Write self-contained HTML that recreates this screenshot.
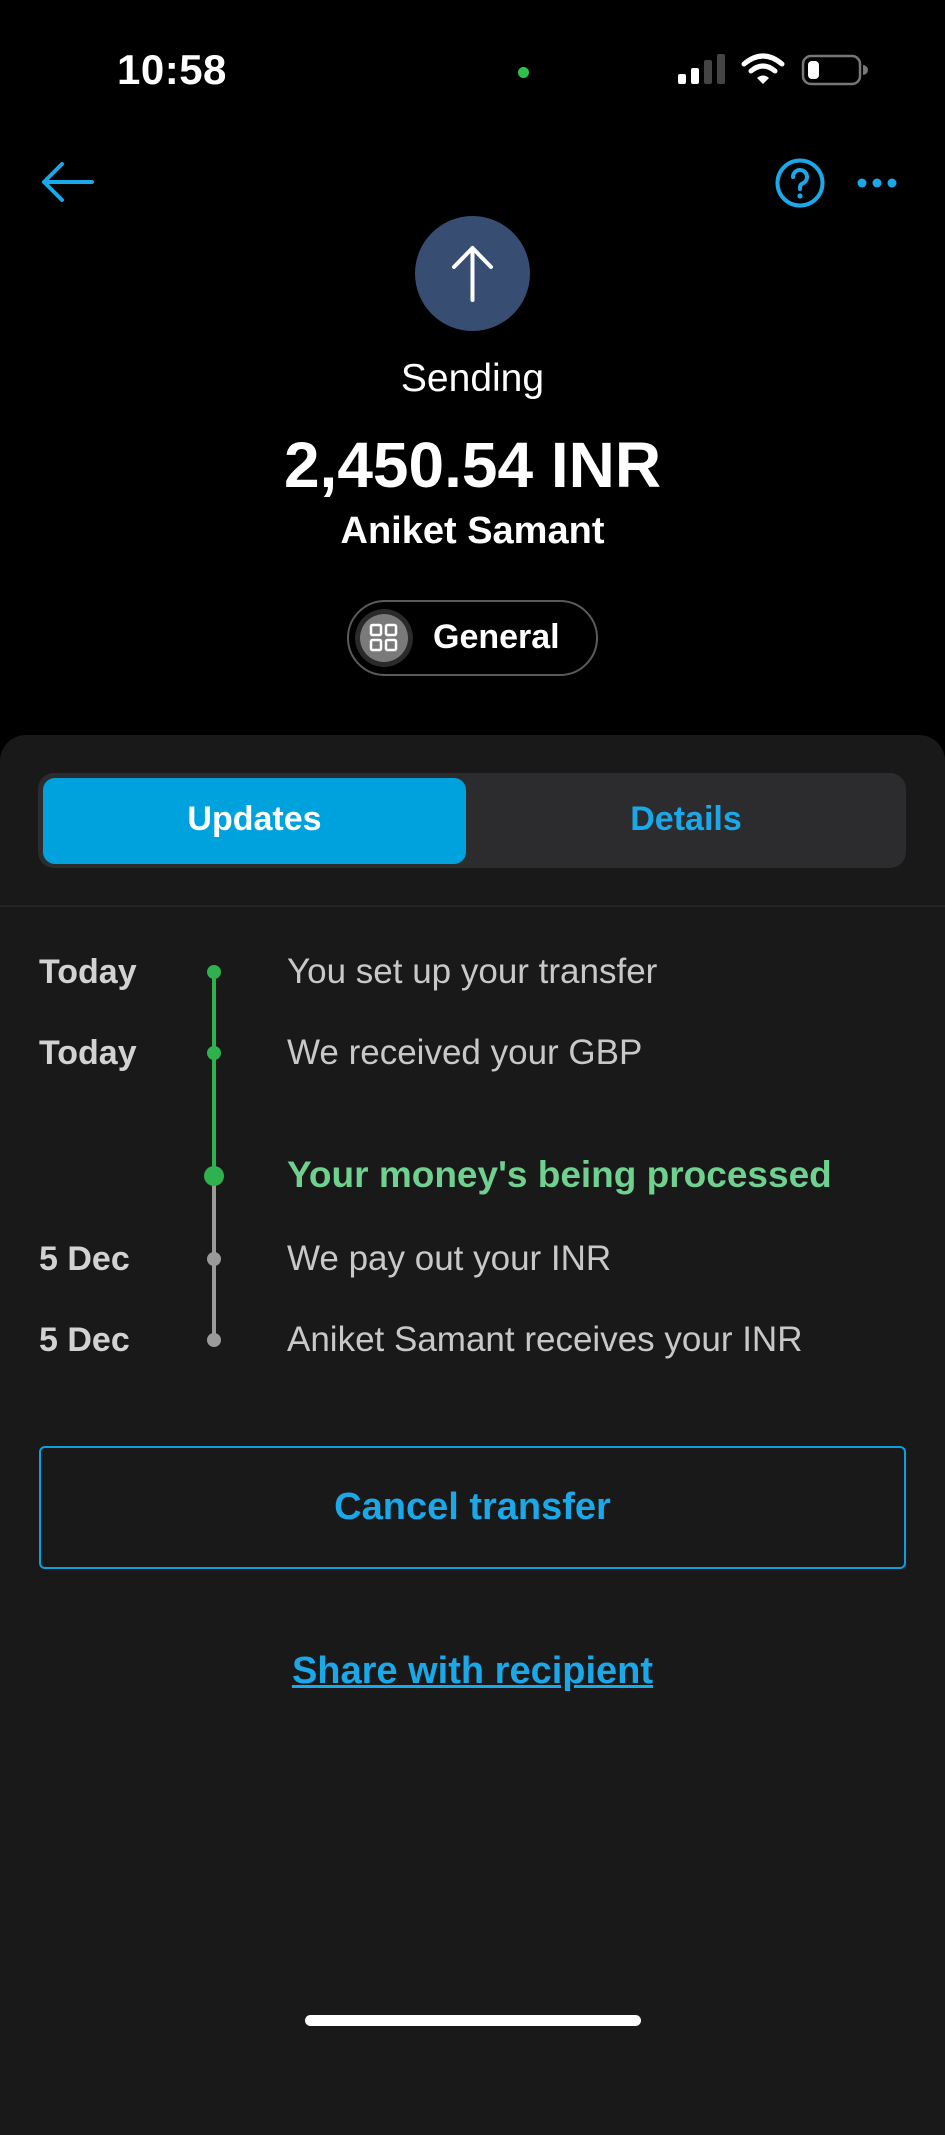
<!DOCTYPE html>
<html><head><meta charset="utf-8"><style>
*{margin:0;padding:0;box-sizing:border-box}
body{width:945px;height:2048px;background:#000;font-family:"Liberation Sans",sans-serif;position:relative;overflow:hidden;color:#fff}
.a{position:absolute}
.c{left:0;width:945px;text-align:center}
.t{white-space:nowrap}
</style></head><body>
<div class="a t" style="left:117px;top:46px;font-size:42px;font-weight:600;letter-spacing:0.5px">10:58</div>
<div class="a" style="left:518px;top:67px;width:11px;height:11px;border-radius:50%;background:#30c04f"></div>
<svg class="a" style="left:670px;top:50px" width="200" height="40">
<rect x="8" y="24" width="8" height="10" rx="2" fill="#fff"/>
<rect x="21" y="18" width="8" height="16" rx="2" fill="#fff"/>
<rect x="34" y="10" width="8" height="24" rx="2" fill="#444"/>
<rect x="47" y="4" width="8" height="30" rx="2" fill="#444"/>
<path d="M74 14 Q93 -2 112 14" stroke="#fff" stroke-width="5" fill="none" stroke-linecap="round"/>
<path d="M81 21 Q93 11 105 21" stroke="#fff" stroke-width="5" fill="none" stroke-linecap="round"/>
<path d="M87 28 L93 34 L99 28 Q93 23 87 28Z" fill="#fff"/>
<rect x="133" y="6" width="57" height="28" rx="8" fill="none" stroke="#777" stroke-width="2.5"/>
<rect x="138" y="11" width="11" height="18" rx="4" fill="#fff"/>
<path d="M193 15 v10 a4 4 0 0 0 0 -10z" fill="#777"/>
</svg>
<svg class="a" style="left:38px;top:160px" width="60" height="44"><path d="M54 22H6M24 4L6 22L24 40" stroke="#1aa8e8" stroke-width="4" fill="none" stroke-linecap="round" stroke-linejoin="round"/></svg>
<svg class="a" style="left:774px;top:157px" width="52" height="52"><circle cx="26" cy="26" r="22.5" stroke="#1aa8e8" stroke-width="4" fill="none"/><path d="M19 20a7 7 0 1 1 9.5 6.5c-1.8.8-2.5 2-2.5 4v1.5" stroke="#1aa8e8" stroke-width="4" fill="none" stroke-linecap="round"/><circle cx="26" cy="39" r="2.6" fill="#1aa8e8"/></svg>
<svg class="a" style="left:856px;top:174px" width="44" height="18"><circle cx="6" cy="9" r="4.5" fill="#1aa8e8"/><circle cx="21" cy="9" r="4.5" fill="#1aa8e8"/><circle cx="36" cy="9" r="4.5" fill="#1aa8e8"/></svg>
<div class="a" style="left:415px;top:216px;width:115px;height:115px;border-radius:50%;background:#374d72"></div>
<svg class="a" style="left:445px;top:244px" width="55" height="60"><path d="M27.5 56V4M9 23L27.5 4L46 23" stroke="#fff" stroke-width="4" fill="none" stroke-linecap="round" stroke-linejoin="round"/></svg>
<div class="a c t" style="top:357px;font-size:39px">Sending</div>
<div class="a c t" style="top:428px;font-size:64px;font-weight:bold">2,450.54 INR</div>
<div class="a c t" style="top:510px;font-size:38px;font-weight:bold">Aniket Samant</div>
<div class="a" style="left:347px;top:600px;width:251px;height:76px;border:2px solid #5a5a5a;border-radius:40px"></div>
<div class="a" style="left:355px;top:609px;width:58px;height:58px;border-radius:50%;background:#2a2a2a"></div>
<div class="a" style="left:360px;top:614px;width:48px;height:48px;border-radius:50%;background:#7a7a7a"></div>
<svg class="a" style="left:369px;top:623px" width="30" height="30"><g fill="none" stroke="#fff" stroke-width="2.5"><rect x="2" y="2" width="10" height="10" rx="1.5"/><rect x="17" y="2" width="10" height="10" rx="1.5"/><rect x="2" y="17" width="10" height="10" rx="1.5"/><rect x="17" y="17" width="10" height="10" rx="1.5"/></g></svg>
<div class="a t" style="left:433px;top:618px;font-size:34px;font-weight:bold">General</div>

<div class="a" style="left:0;top:735px;width:945px;height:1400px;background:#191919;border-radius:26px 26px 0 0"></div>
<div class="a" style="left:38px;top:773px;width:868px;height:95px;background:#2c2c2e;border-radius:16px"></div>
<div class="a" style="left:43px;top:778px;width:423px;height:86px;background:#00a2dd;border-radius:12px"></div>
<div class="a t" style="left:43px;width:423px;text-align:center;top:800px;font-size:34px;font-weight:bold">Updates</div>
<div class="a t" style="left:466px;width:440px;text-align:center;top:800px;font-size:34px;font-weight:bold;color:#1aa8e8">Details</div>
<div class="a" style="left:0;top:905px;width:945px;height:2px;background:#232323"></div>

<div class="a" style="left:212px;top:972px;width:4px;height:204px;background:#2fb14e"></div>
<div class="a" style="left:212px;top:1176px;width:4px;height:164px;background:#9a9a9a"></div>
<div class="a" style="left:207px;top:965px;width:14px;height:14px;border-radius:50%;background:#2fb14e"></div>
<div class="a" style="left:207px;top:1046px;width:14px;height:14px;border-radius:50%;background:#2fb14e"></div>
<div class="a" style="left:204px;top:1166px;width:20px;height:20px;border-radius:50%;background:#2fb14e"></div>
<div class="a" style="left:207px;top:1252px;width:14px;height:14px;border-radius:50%;background:#9a9a9a"></div>
<div class="a" style="left:207px;top:1333px;width:14px;height:14px;border-radius:50%;background:#9a9a9a"></div>

<div class="a t" style="left:39px;top:953px;font-size:34px;font-weight:bold;color:#d2d2d2">Today</div>
<div class="a t" style="left:39px;top:1034px;font-size:34px;font-weight:bold;color:#d2d2d2">Today</div>
<div class="a t" style="left:39px;top:1240px;font-size:34px;font-weight:bold;color:#d2d2d2">5 Dec</div>
<div class="a t" style="left:39px;top:1321px;font-size:34px;font-weight:bold;color:#d2d2d2">5 Dec</div>
<div class="a t" style="left:287px;top:952px;font-size:35px;color:#c8c8c8">You set up your transfer</div>
<div class="a t" style="left:287px;top:1033px;font-size:35px;color:#c8c8c8">We received your GBP</div>
<div class="a t" style="left:287px;top:1154px;font-size:37px;font-weight:bold;color:#6fd08f">Your money's being processed</div>
<div class="a t" style="left:287px;top:1239px;font-size:35px;color:#c8c8c8">We pay out your INR</div>
<div class="a t" style="left:287px;top:1320px;font-size:35px;color:#c8c8c8">Aniket Samant receives your INR</div>

<div class="a" style="left:39px;top:1446px;width:867px;height:123px;border:2px solid #0aa0dc;border-radius:6px"></div>
<div class="a c t" style="top:1486px;font-size:38px;font-weight:bold;color:#1aa8e8">Cancel transfer</div>
<div class="a c t" style="top:1650px;font-size:38px;font-weight:bold;color:#1aa8e8;text-decoration:underline">Share with recipient</div>
<div class="a" style="left:305px;top:2015px;width:336px;height:11px;border-radius:6px;background:#fff"></div>
</body></html>
